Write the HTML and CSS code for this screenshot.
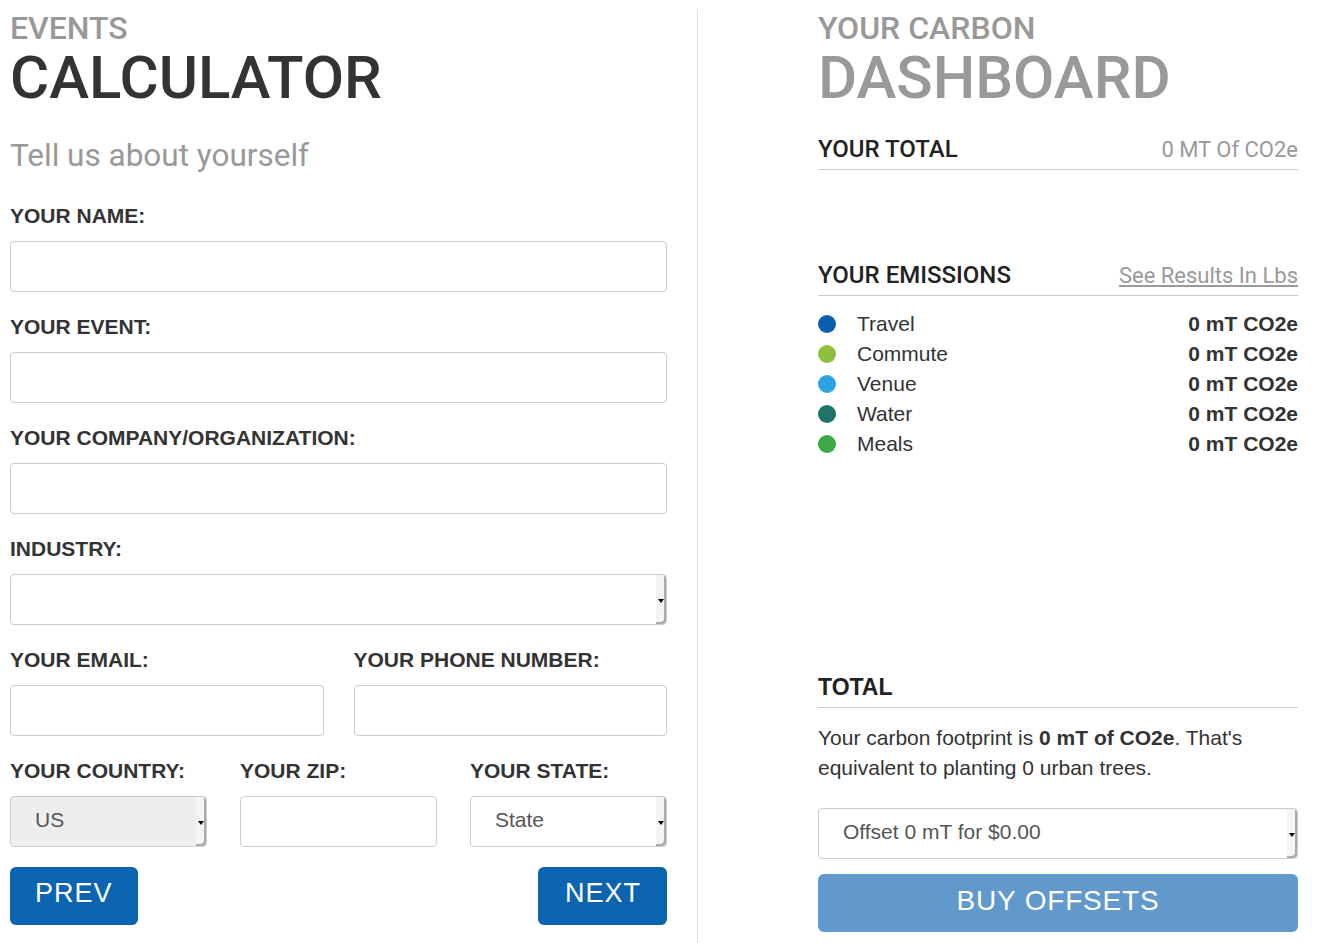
FILE: index.html
```
<!DOCTYPE html>
<html lang="en">
<head>
    <meta charset="UTF-8">
    <title>Events Calculator</title>
    <link rel="stylesheet" href="styles.css">
</head>
<body>
    <div class="page">
        <div class="calculator">
            <div class="kicker">EVENTS</div>
            <h1 class="title">CALCULATOR</h1>
            <h2 class="subtitle">Tell us about yourself</h2>

            <div class="field">
                <label>YOUR NAME:</label>
                <input type="text">
            </div>
            <div class="field">
                <label>YOUR EVENT:</label>
                <input type="text">
            </div>
            <div class="field">
                <label>YOUR COMPANY/ORGANIZATION:</label>
                <input type="text">
            </div>
            <div class="field">
                <label>INDUSTRY:</label>
                <div class="select-box"><span></span></div>
            </div>
            <div class="row two">
                <div class="field">
                    <label>YOUR EMAIL:</label>
                    <input type="text">
                </div>
                <div class="field">
                    <label>YOUR PHONE NUMBER:</label>
                    <input type="text">
                </div>
            </div>
            <div class="row three">
                <div class="field">
                    <label>YOUR COUNTRY:</label>
                    <div class="select-box disabled"><span>US</span></div>
                </div>
                <div class="field">
                    <label>YOUR ZIP:</label>
                    <input type="text">
                </div>
                <div class="field">
                    <label>YOUR STATE:</label>
                    <div class="select-box"><span>State</span></div>
                </div>
            </div>
            <div class="nav-buttons">
                <button class="btn">PREV</button>
                <button class="btn next">NEXT</button>
            </div>
        </div>

        <div class="dashboard">
            <div class="kicker">YOUR CARBON</div>
            <h1 class="title light">DASHBOARD</h1>

            <div class="section-head">
                <h3>YOUR TOTAL</h3>
                <span class="muted">0 MT Of CO2e</span>
            </div>

            <div class="section-head emissions-head">
                <h3>YOUR EMISSIONS</h3>
                <a href="#" class="muted link">See Results In Lbs</a>
            </div>
            <ul class="emissions">
                <li><span class="dot travel"></span><span class="name">Travel</span><b>0 mT CO2e</b></li>
                <li><span class="dot commute"></span><span class="name">Commute</span><b>0 mT CO2e</b></li>
                <li><span class="dot venue"></span><span class="name">Venue</span><b>0 mT CO2e</b></li>
                <li><span class="dot water"></span><span class="name">Water</span><b>0 mT CO2e</b></li>
                <li><span class="dot meals"></span><span class="name">Meals</span><b>0 mT CO2e</b></li>
            </ul>

            <div class="total">
                <div class="section-head total-head">
                    <h3>TOTAL</h3>
                </div>
                <p class="summary">Your carbon footprint is <b>0 mT of CO2e</b>. That's equivalent to planting 0 urban trees.</p>
                <div class="select-box"><span>Offset 0 mT for $0.00</span></div>
                <button class="btn buy">BUY OFFSETS</button>
            </div>
        </div>
    </div>
</body>
</html>
```

FILE: styles.css
```
body {
    margin: 0;
    font-family: 'Liberation Sans', Arial, sans-serif;
    color: #333;
    background: #fff;
}
.page {
    display: flex;
    padding: 10px 20px 0 10px;
    min-height: 933px;
}
.calculator {
    width: 657px;
    padding-right: 30px;
    border-right: 1px solid #ddd;
}
.dashboard {
    width: 480px;
    margin-left: 120px;
    display: flex;
    flex-direction: column;
}
.kicker {
    font-family: Roboto, sans-serif;
    font-weight: 500;
    font-size: 32px;
    line-height: 36px;
    color: #999;
}
.title {
    font-family: Roboto, sans-serif;
    font-weight: 500;
    font-size: 60px;
    line-height: 70px;
    color: #333;
    margin: -3px 0 -3px;
}
.title.light {
    color: #999;
}
.subtitle {
    font-family: Roboto, sans-serif;
    font-weight: 400;
    font-size: 31.5px;
    line-height: 36px;
    color: #999;
    margin: 28px 0 30px;
}
.field {
    margin-bottom: 23px;
}
.field label {
    display: block;
    font-weight: bold;
    font-size: 21px;
    line-height: 24px;
    margin-bottom: 13px;
}
input {
    display: block;
    box-sizing: border-box;
    width: 100%;
    height: 51px;
    border: 1px solid #ccc;
    border-radius: 4px;
    margin: 0;
    font-size: 21px;
    padding: 0 24px;
}
.select-box {
    box-sizing: border-box;
    height: 51px;
    border: 1px solid #ccc;
    border-radius: 4px;
    display: flex;
    align-items: center;
    padding: 0 24px 3px;
    font-size: 21px;
    color: #555;
    position: relative;
    background: #fff;
}
.select-box::after {
    content: "";
    position: absolute;
    right: 0;
    top: 0;
    bottom: 0;
    width: 10px;
    background: #f4f4f4;
    border-radius: 0 4px 4px 0;
    box-shadow: inset -2px -2px 0 #aaa;
}
.select-box::before {
    content: "";
    position: absolute;
    right: 2px;
    top: 50%;
    margin-top: -1px;
    border-left: 3px solid transparent;
    border-right: 3px solid transparent;
    border-top: 4px solid #000;
    z-index: 1;
}
.select-box.disabled {
    background: #eee;
}
.row {
    display: grid;
    gap: 30px;
}
.row.two {
    grid-template-columns: 1fr 1fr;
}
.row.three {
    grid-template-columns: 1fr 1fr 1fr;
    gap: 33px;
}
.nav-buttons {
    display: flex;
    justify-content: space-between;
    margin-top: -3px;
}
.btn {
    background: #0c63b0;
    color: #fff;
    border: none;
    border-radius: 6px;
    height: 58px;
    padding: 0 25px 5px;
    font-family: 'Liberation Sans', Arial, sans-serif;
    font-size: 27px;
    letter-spacing: 1px;
    cursor: pointer;
}
.btn.next {
    padding: 0 26px 5px 27px;
}
.section-head {
    display: flex;
    justify-content: space-between;
    align-items: baseline;
    border-bottom: 1px solid #ccc;
    padding-bottom: 7px;
    margin-top: 26px;
}
.section-head h3 {
    margin: 0;
    font-family: Roboto, sans-serif;
    font-weight: 500;
    font-size: 24px;
    line-height: 26px;
    color: #222;
}
.muted {
    font-family: Roboto, sans-serif;
    font-size: 22px;
    color: #999;
}
.link {
    text-decoration: underline;
}
.emissions-head {
    margin-top: 92px;
}
.emissions {
    list-style: none;
    padding: 0;
    margin: 13px 0 0;
}
.emissions li {
    display: flex;
    align-items: center;
    height: 30px;
    font-size: 21px;
}
.emissions .name {
    flex: 1;
    color: #333;
}
.emissions b {
    color: #333;
}
.dot {
    width: 18px;
    height: 18px;
    border-radius: 50%;
    margin-right: 21px;
}
.dot.travel { background: #0c5fae; }
.dot.commute { background: #8dc03f; }
.dot.venue { background: #2ea3e3; }
.dot.water { background: #1e7565; }
.dot.meals { background: #3daa4a; }
.total {
    margin-top: auto;
    padding-bottom: 11px;
}
.total-head h3 {
    font-family: 'Liberation Sans', Arial, sans-serif;
    font-weight: bold;
    font-size: 23px;
}
.summary {
    font-size: 21px;
    line-height: 30px;
    margin: 15px 0 25px;
}
.btn.buy {
    width: 100%;
    margin-top: 15px;
    background: #6299cc;
    font-size: 28px;
    letter-spacing: 0.8px;
}
```
